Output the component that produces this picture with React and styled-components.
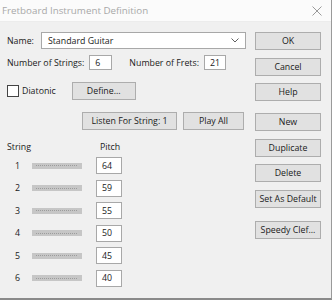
import React from "react";
import styled, { createGlobalStyle } from "styled-components";

const GlobalStyle = createGlobalStyle`
  html, body {
    margin: 0;
    padding: 0;
    background: #f0f0f0;
  }
  body {
    font-family: "Segoe UI", "Open Sans", "Noto Sans", sans-serif;
    font-size: 8.8px;
    color: #1a1a1a;
  }
`;

const strings = [64, 59, 55, 50, 45, 40];

const App = () => (
  <React.Fragment>
    <GlobalStyle />
    <Window>
      <TitleBar>
        <span>Fretboard Instrument Definition</span>
        <Close>
          <svg width="10" height="10" viewBox="0 0 10 10">
            <path d="M0.5 0.5 L9.5 9.5 M9.5 0.5 L0.5 9.5" stroke="#9a9a9a" strokeWidth="1" />
          </svg>
        </Close>
      </TitleBar>
      <Body>
        <Left>
          <Row top={10}>
            <Label>Name:</Label>
            <Select>
              <span>Standard Guitar</span>
              <svg width="8" height="5" viewBox="0 0 8 5">
                <path d="M0.5 0.5 L4 4 L7.5 0.5" fill="none" stroke="#606060" strokeWidth="1" />
              </svg>
            </Select>
          </Row>
          <Row top={6}>
            <Label>Number of Strings:</Label>
            <TextBox width={23}>6</TextBox>
            <Label gap={17}>Number of Frets:</Label>
            <TextBox width={22}>21</TextBox>
          </Row>
          <Row top={12}>
            <Check />
            <Label gap={3}>Diatonic</Label>
            <Button width={64} gap={11}>Define...</Button>
          </Row>
          <Row top={12} indent={82}>
            <Button width={95}>Listen For String: 1</Button>
            <Button width={61} gap={6}>Play All</Button>
          </Row>
          <Header>
            <span>String</span>
            <span>Pitch</span>
          </Header>
          <StringList>
            {strings.map((p, i) => (
              <StringRow key={i}>
                <Num>{i + 1}</Num>
                <Slider />
                <TextBox width={26} tall>{p}</TextBox>
              </StringRow>
            ))}
          </StringList>
        </Left>
        <Right>
          <Button width={66}>OK</Button>
          <Button width={66} gapTop={7.5}>Cancel</Button>
          <Button width={66} gapTop={7.5}>Help</Button>
          <Button width={66} gapTop={12}>New</Button>
          <Button width={66} gapTop={7.5}>Duplicate</Button>
          <Button width={66} gapTop={7.5}>Delete</Button>
          <Button width={66} gapTop={7.5}>Set As Default</Button>
          <Button width={66} gapTop={13}>Speedy Clef...</Button>
        </Right>
      </Body>
    </Window>
  </React.Fragment>
);

export default App;

const Window = styled.div`
  width: 332px;
  height: 300px;
  box-sizing: border-box;
  background: #f0f0f0;
  border-right: 1px solid #9a9a9a;
  border-bottom: 2px solid #8a8a8a;
  display: flex;
  flex-direction: column;
  overflow: hidden;
`;

const TitleBar = styled.div`
  height: 21px;
  flex: none;
  background: #fbfbfb;
  border-bottom: 1px solid #ececec;
  display: flex;
  align-items: center;
  justify-content: space-between;
  padding: 0 9px 0 2px;
  color: #a8a8a8;
  font-size: 9.8px;
`;

const Close = styled.div`
  display: flex;
  align-items: center;
`;

const Body = styled.div`
  flex: 1;
  display: flex;
`;

const Left = styled.div`
  width: 255px;
  display: flex;
  flex-direction: column;
`;

const Right = styled.div`
  padding-top: 10px;
  display: flex;
  flex-direction: column;
`;

const Row = styled.div`
  display: flex;
  align-items: center;
  margin-top: ${p => p.top}px;
  padding-left: ${p => p.indent || 7}px;
`;

const Label = styled.span`
  margin-left: ${p => p.gap || 0}px;
  white-space: nowrap;
  margin-right: 5px;
`;

const Select = styled.div`
  width: 205px;
  height: 17px;
  box-sizing: border-box;
  margin-left: 2px;
  background: #fff;
  border: 1px solid #a8a8a8;
  display: flex;
  align-items: center;
  justify-content: space-between;
  padding: 0 6px 0 6px;
`;

const TextBox = styled.div`
  width: ${p => p.width}px;
  height: ${p => (p.tall ? 17 : 15)}px;
  box-sizing: border-box;
  background: #fff;
  border: 1px solid #a8a8a8;
  display: flex;
  align-items: center;
  padding-left: 5px;
`;

const Check = styled.div`
  width: 12px;
  height: 12px;
  box-sizing: border-box;
  background: #fff;
  border: 1px solid #444;
`;

const Button = styled.div`
  width: ${p => p.width}px;
  height: 18px;
  box-sizing: border-box;
  margin-left: ${p => p.gap || 0}px;
  margin-top: ${p => p.gapTop || 0}px;
  background: #e1e1e1;
  border: 1px solid #adadad;
  display: flex;
  align-items: center;
  justify-content: center;
  white-space: nowrap;
  flex: none;
`;

const Header = styled.div`
  display: flex;
  gap: 69px;
  padding-left: 7px;
  margin-top: 11px;
`;

const StringList = styled.div`
  display: flex;
  flex-direction: column;
  gap: 5.6px;
  margin-top: 4px;
  padding-left: 15px;
`;

const StringRow = styled.div`
  display: flex;
  align-items: center;
`;

const Num = styled.span`
  width: 17px;
`;

const Slider = styled.div`
  width: 50px;
  height: 6px;
  margin-right: 14px;
  background:
    repeating-linear-gradient(90deg, #9c9c9c 0 1px, transparent 1px 2px) center / 42px 1px no-repeat,
    #c6c6c6;
`;
